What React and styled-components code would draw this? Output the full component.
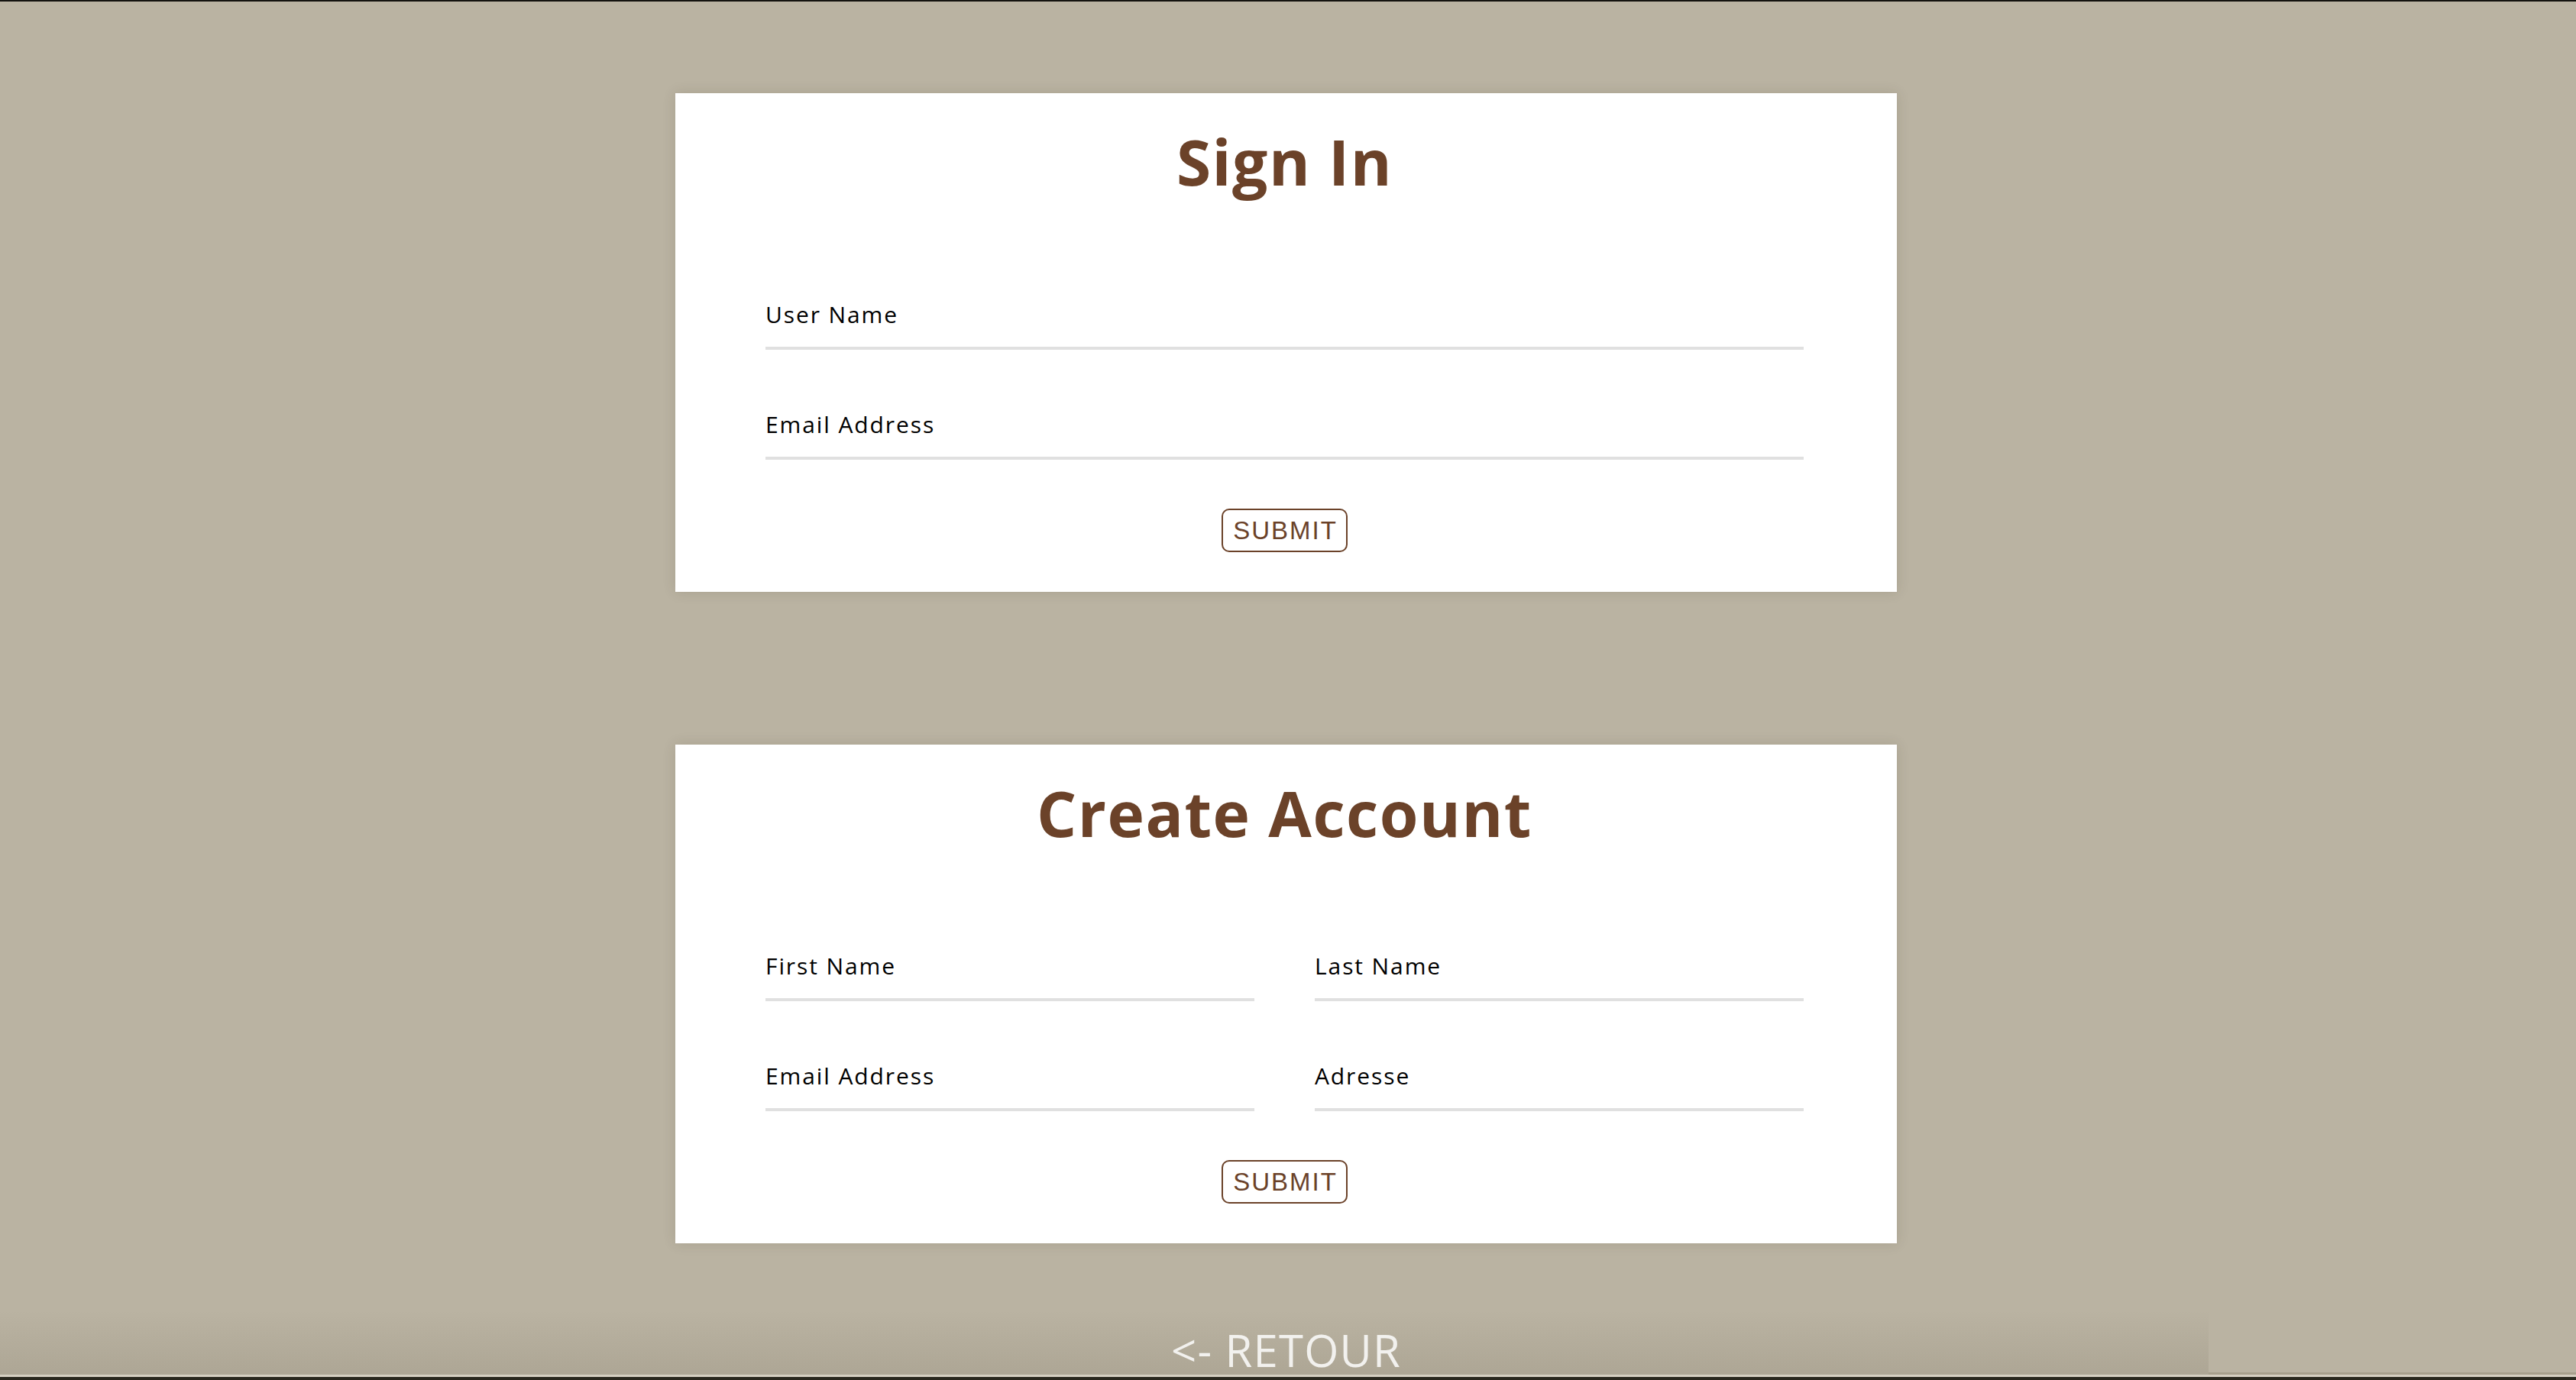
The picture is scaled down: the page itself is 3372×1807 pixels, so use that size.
import React from "react";
import styled, { createGlobalStyle } from "styled-components";

const Global = createGlobalStyle`
  html, body {
    margin: 0;
    padding: 0;
    background: #bab3a2;
    overflow: hidden;
  }
  * { box-sizing: border-box; }
`;

const Page = styled.div`
  position: relative;
  width: 3372px;
  height: 1807px;
  background: #bab3a2;
  border-top: 2px solid #14130f;
  display: flex;
  flex-direction: column;
  align-items: center;
  padding: 120px 5px 0 0;
  font-family: "Open Sans", "Liberation Sans", sans-serif;
  overflow: hidden;
`;

const Card = styled.section`
  width: 1599px;
  height: 653px;
  background: #ffffff;
  box-shadow: 0 0 16px rgba(60, 50, 30, 0.14);
  padding: 40px 122px 52px 118px;
  display: flex;
  flex-direction: column;
  margin-bottom: ${(p) => p.$gap || 0}px;
`;

const Title = styled.h1`
  margin: 0;
  font-family: "Open Sans", sans-serif;
  font-weight: 700;
  font-size: 82px;
  line-height: 98px;
  letter-spacing: 1.5px;
  color: #6b4229;
  text-align: center;
`;

const Fields = styled.div`
  margin-top: 132px;
  display: grid;
  grid-template-columns: ${(p) => (p.$cols === 2 ? "1fr 1fr" : "1fr")};
  column-gap: 79px;
  row-gap: 78px;
`;

const Field = styled.label`
  display: flex;
  flex-direction: column;
`;

const Label = styled.span`
  font-family: "Open Sans", sans-serif;
  font-size: 30px;
  line-height: 40px;
  letter-spacing: 1.9px;
  color: #000;
`;

const Input = styled.input`
  height: 26px;
  border: none;
  border-bottom: 4px solid #e0e0e0;
  outline: none;
  padding: 0;
  background: transparent;
`;

const Actions = styled.div`
  margin-top: 64px;
  display: flex;
  justify-content: center;
`;

const Submit = styled.button`
  height: 57px;
  padding: 0 11px 0 13px;
  border: 2px solid #6b4229;
  border-radius: 10px;
  background: #fff;
  color: #6b4229;
  font-family: "Liberation Sans", Arial, sans-serif;
  font-size: 33px;
  letter-spacing: 2px;
  line-height: 37px;
  cursor: pointer;
`;

const Footer = styled.footer`
  position: absolute;
  left: 0;
  right: 0;
  bottom: 0;
  height: 179px;
  display: flex;
  justify-content: center;
  align-items: flex-end;
  padding: 0 5px 4px 0;
  background: linear-gradient(
    to bottom,
    rgba(0, 0, 0, 0) 0%,
    rgba(0, 0, 0, 0) 50%,
    rgba(40, 30, 10, 0.09) 100%
  );
  border-bottom: 4px solid #2a281e;

  &::before {
    content: "";
    position: absolute;
    left: 0;
    right: 0;
    bottom: 0;
    height: 3px;
    background: #d6d0c2;
  }

  &::after {
    content: "";
    position: absolute;
    right: 0;
    top: 0;
    width: 481px;
    bottom: 3px;
    background: #bab3a2;
    border-bottom: 3px solid #a79f8c;
  }
`;

const BackLink = styled.a`
  position: relative;
  z-index: 1;
  font-family: "Open Sans", sans-serif;
  font-weight: 400;
  font-size: 58px;
  line-height: 62px;
  letter-spacing: 1.2px;
  color: #f2f1ee;
  text-decoration: none;
`;

function SignIn() {
  return (
    <Card $gap={200}>
      <Title>Sign In</Title>
      <Fields $cols={1}>
        <Field>
          <Label>User Name</Label>
          <Input type="text" />
        </Field>
        <Field>
          <Label>Email Address</Label>
          <Input type="email" />
        </Field>
      </Fields>
      <Actions>
        <Submit>SUBMIT</Submit>
      </Actions>
    </Card>
  );
}

function CreateAccount() {
  return (
    <Card>
      <Title>Create Account</Title>
      <Fields $cols={2}>
        <Field>
          <Label>First Name</Label>
          <Input type="text" />
        </Field>
        <Field>
          <Label>Last Name</Label>
          <Input type="text" />
        </Field>
        <Field>
          <Label>Email Address</Label>
          <Input type="email" />
        </Field>
        <Field>
          <Label>Adresse</Label>
          <Input type="text" />
        </Field>
      </Fields>
      <Actions>
        <Submit>SUBMIT</Submit>
      </Actions>
    </Card>
  );
}

export default function App() {
  return (
    <>
      <Global />
      <Page>
        <SignIn />
        <CreateAccount />
        <Footer>
          <BackLink href="#">&lt;- RETOUR</BackLink>
        </Footer>
      </Page>
    </>
  );
}
